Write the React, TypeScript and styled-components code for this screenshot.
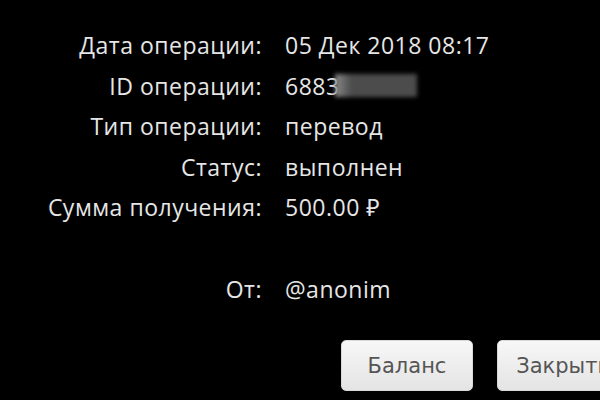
import React from "react";
import styled, { createGlobalStyle } from "styled-components";

const GlobalStyle = createGlobalStyle`
  html, body {
    margin: 0;
    padding: 0;
    background: #000;
  }
`;

const Page = styled.div`
  width: 600px;
  height: 400px;
  overflow: hidden;
  background: #000;
  color: #e6e6e6;
  font-family: "Open Sans", "Noto Sans", sans-serif;
  font-size: 23px;
  letter-spacing: 0.5px;
  box-sizing: border-box;
  padding-top: 25px;
`;

const Details = styled.div`
  display: grid;
  grid-template-columns: 262px auto;
  column-gap: 23px;
  row-gap: 0;
`;

const Label = styled.div<{ $gapBefore?: boolean }>`
  text-align: right;
  height: 40.5px;
  line-height: 40.5px;
  white-space: nowrap;
  margin-top: ${(p) => (p.$gapBefore ? "41px" : "0")};
`;

const Value = styled.div<{ $gapBefore?: boolean }>`
  height: 40.5px;
  line-height: 40.5px;
  white-space: nowrap;
  display: flex;
  align-items: center;
  margin-top: ${(p) => (p.$gapBefore ? "41px" : "0")};
`;

const Blurred = styled.span`
  display: inline-block;
  width: 82px;
  height: 23px;
  margin-left: -5px;
  background: linear-gradient(90deg, #8a8a8a, #4c4c4c 20%, #4c4c4c);
  filter: blur(2px);
`;

const Actions = styled.div`
  display: flex;
  gap: 24px;
  margin-top: 31px;
  margin-left: 341px;
`;

const Button = styled.button`
  flex: 0 0 auto;
  width: 132px;
  height: 51px;
  border: 1px solid #d8d8d8;
  border-radius: 5px;
  background: linear-gradient(#f7f7f7, #e4e4e4);
  color: #555;
  font-family: "DejaVu Sans", Verdana, sans-serif;
  font-size: 21px;
  letter-spacing: 0;
  padding: 0;
`;

const rows = [
  { label: "Дата операции:", value: "05 Дек 2018 08:17" },
  { label: "ID операции:", value: "6883", hidden: true },
  { label: "Тип операции:", value: "перевод" },
  { label: "Статус:", value: "выполнен" },
  { label: "Сумма получения:", value: "500.00 ₽" },
  { label: "От:", value: "@anonim", gap: true },
];

export default function App() {
  return (
    <Page>
      <GlobalStyle />
      <Details>
        {rows.map((r) => (
          <React.Fragment key={r.label}>
            <Label $gapBefore={r.gap}>{r.label}</Label>
            <Value $gapBefore={r.gap}>
              {r.value}
              {r.hidden && <Blurred />}
            </Value>
          </React.Fragment>
        ))}
      </Details>
      <Actions>
        <Button>Баланс</Button>
        <Button>Закрыть</Button>
      </Actions>
    </Page>
  );
}
